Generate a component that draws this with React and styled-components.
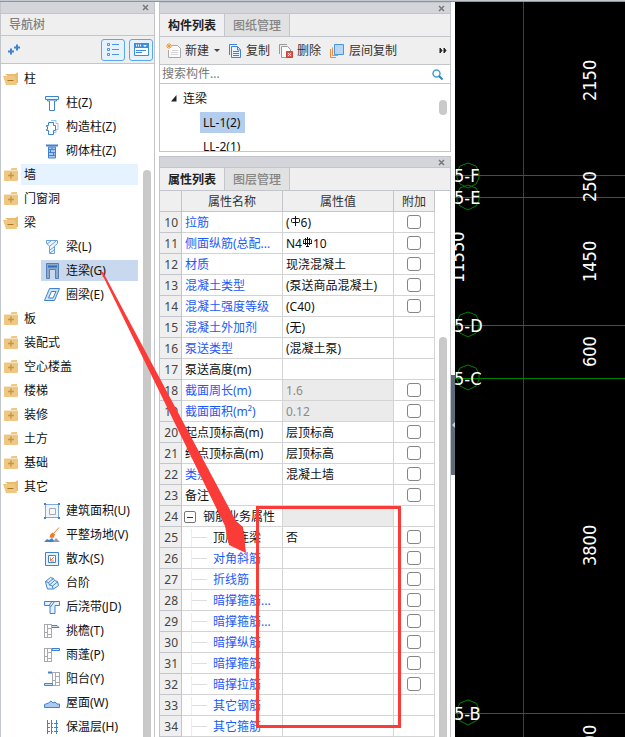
import React from "react";
import styled, { createGlobalStyle, css } from "styled-components";

const Global = createGlobalStyle`
  * { box-sizing: border-box; }
  body { margin: 0; background: #fff; }
  body, button, input, table {
    font-family: "Noto Sans", "Noto Sans CJK SC", sans-serif;
    font-size: 12px;
    line-height: 20px;
    color: #111;
  }
  button { border: 0; padding: 0; background: none; white-space: nowrap; }
`;

const line = "#c3c5cc";

const Window = styled.div`
  position: relative;
  display: flex;
  flex-direction: column;
  height: 100vh;
  overflow: hidden;
`;
const TopEdge = styled.div`
  flex: none;
  height: 2px;
  background: #c3c9cf;
  border-bottom: 1px solid #8d949b;
`;
const Workspace = styled.div`
  flex: 1;
  min-height: 0;
  display: flex;
`;
const Column = styled.div`
  display: flex;
  flex-direction: column;
  gap: 4px;
  width: 292px;
  margin-left: 4px;
`;
const Panel = styled.section`
  display: flex;
  flex-direction: column;
  min-height: 0;
  border: 1px solid ${line};
  border-width: ${(p) => (p.$dock ? "0 1px 0 1px" : "1px")};
  ${(p) => p.$dock && css`width: 155px;`}
  ${(p) => p.$fill && css`flex: 1; border-bottom: 0;`}
`;
const PanelHead = styled.header`
  flex: none;
  display: flex;
  justify-content: flex-end;
  align-items: center;
  height: ${(p) => (p.$tall ? 12 : 11)}px;
  padding-right: 5px;
  background: #d4d5db;
  border-bottom: 1px solid ${line};
`;
const CloseButton = styled.button`
  display: flex;
`;
const PanelTitle = styled.h2`
  flex: none;
  margin: 0;
  padding: 1px 8px 0;
  height: 22px;
  font-size: 12px;
  font-weight: 500;
  color: #808080;
  background: #efefef;
  border-bottom: 1px solid ${line};
`;
const Toolbar = styled.div`
  flex: none;
  display: flex;
  align-items: center;
  height: 28px;
  padding: ${(p) => (p.$views ? "0 1px 0 6px" : "0 3px 0 6px")};
  background: #efefef;
  border-bottom: 1px solid ${line};
`;
const Spacer = styled.span`
  flex: 1;
`;
const ViewButton = styled.button`
  display: flex;
  align-items: center;
  justify-content: center;
  width: 24px;
  height: 22px;
  margin-left: 4px;
  background: #e6f2fd;
  border: 1px solid #5aa7ee;
  border-radius: 3px;
`;
const ToolButton = styled.button`
  display: flex;
  align-items: center;
  gap: 4px;
  margin-right: 8px;
  color: #333;
`;
const IconButton = styled.button`
  display: flex;
`;
const Tabs = styled.div`
  flex: none;
  display: flex;
  height: 23px;
  background: #efefef;
  border-bottom: 1px solid ${line};
`;
const Tab = styled.button`
  padding: 1px 8px 0;
  border-right: 1px solid ${line};
  color: ${(p) => (p.$active ? "#222" : "#858585")};
  font-weight: ${(p) => (p.$active ? 700 : 500)};
  background: ${(p) => (p.$active ? "#f0f0f0" : "#e1e1e1")};
`;
const Scrolled = styled.div`
  flex: 1;
  min-height: 0;
  display: flex;
  overflow: hidden;
`;
const ScrollTrack = styled.div`
  flex: none;
  display: flex;
  width: 15px;
  padding: 0 3px 0 4px;
`;
const ScrollThumb = styled.div`
  width: 8px;
  background: #c9c9c9;
  margin-top: ${(p) => p.$start}px;
  ${(p) => (p.$length ? css`height: ${p.$length}px; border-radius: 4px;` : css`border-radius: 4px 4px 0 0;`)}
`;

/* navigation tree */
const Tree = styled.ul`
  flex: 1;
  display: flex;
  flex-direction: column;
  gap: 3px;
  margin: 0;
  padding: 4px 1px 0 2px;
  list-style: none;
`;
const Branch = styled.li`
  display: flex;
  align-items: center;
  height: 21px;
`;
const BranchLabel = styled.button`
  flex: 1;
  height: 21px;
  margin-left: 2px;
  padding-left: 3px;
  text-align: left;
  background: ${(p) => (p.$hover ? "#e5f2ff" : "none")};
`;
const Leaf = styled.li`
  margin-left: 38px;
  background: ${(p) => (p.$selected ? "#c8d8ef" : "none")};
`;
const LeafButton = styled.button`
  display: flex;
  align-items: center;
  gap: 6px;
  height: 21px;
  padding-left: 3px;
`;

/* component list */
const SearchBox = styled.label`
  flex: none;
  display: flex;
  align-items: center;
  height: 19px;
  padding: 0 7px 0 2px;
  border-bottom: 1px solid ${line};
`;
const SearchInput = styled.input`
  flex: 1;
  min-width: 0;
  height: 18px;
  padding: 0;
  border: 0;
  outline: 0;
  &::placeholder { color: #777; }
`;
const ComponentList = styled.div`
  flex: 1;
  height: 67px;
  display: flex;
  flex-direction: column;
  align-items: flex-start;
  gap: 3px;
  padding: 4px 0 0 10px;
  overflow: hidden;
`;
const GroupName = styled.button`
  flex: none;
  display: flex;
  align-items: center;
  gap: 6px;
  height: 21px;
`;
const ComponentName = styled.button`
  flex: none;
  height: 21px;
  margin-left: 30px;
  padding: 0 5px 0 3px;
  background: ${(p) => (p.$selected ? "#b3cdee" : "none")};
`;

/* property table */
const Grid = styled.table`
  flex: 1;
  width: 100%;
  table-layout: fixed;
  border-collapse: separate;
  border-spacing: 0;
  align-self: flex-start;
  line-height: 18px;
`;
const HeadCell = styled.th`
  height: 21px;
  padding: 2px 0 0;
  font-weight: 400;
  color: #333;
  background: #efefef;
  border-right: 1px solid ${line};
  border-bottom: 1px solid ${line};
  width: ${(p) => (p.$width ? p.$width + "px" : "auto")};
`;
const Cell = styled.td`
  height: 21px;
  padding: 2px 0 0 3px;
  white-space: nowrap;
  overflow: hidden;
  color: ${(p) => (p.$link ? "#1a5afa" : p.$off ? "#8a8a8a" : "#111")};
  background: ${(p) => (p.$off ? "#ebebeb" : "#fff")};
  border-right: 1px solid #d4d4d4;
  border-bottom: 1px solid #d4d4d4;
`;
const NumberCell = styled(Cell)`
  padding: 2px 3px 0 0;
  text-align: right;
  color: #444;
  background: #efefef;
  border-color: ${line};
`;
const CheckCell = styled(Cell)`
  padding: 0;
  text-align: center;
`;
const NameLine = styled.span`
  display: flex;
  align-items: center;
  gap: ${(p) => (p.$child ? 6 : 7)}px;
  padding-left: ${(p) => (p.$child ? 6 : 0)}px;
`;
const Twig = styled.span`
  width: 16px;
  height: 18px;
  border-left: 1px solid #ededed;
  background: linear-gradient(#dedede, #dedede) 0 8px / 16px 1px no-repeat;
`;
const Toggle = styled.button`
  display: flex;
  align-items: center;
  justify-content: center;
  width: 12px;
  height: 12px;
  margin-left: -1px;
  border: 1px solid #777;
  border-radius: 2px;
  line-height: 10px;
`;
const ValueLine = styled.span`
  display: flex;
  align-items: flex-start;
`;
const Check = styled.input`
  appearance: none;
  display: block;
  width: 14px;
  height: 14px;
  margin: 0 auto;
  background: #fff;
  border: 1px solid #858585;
  border-radius: 3px;
`;

const Gutter = styled.div`
  flex: none;
  width: 4px;
`;
const CollapseHandle = styled.button`
  display: flex;
  align-items: center;
  justify-content: flex-end;
  width: 4px;
  height: 100px;
  margin-top: 373px;
  background: #5f6b78;
`;
const Viewport = styled.main`
  flex: 1;
  min-width: 0;
  overflow: hidden;
  background: #000;
`;
const Drawing = styled.svg`
  display: block;
  font-family: "DejaVu Sans Condensed", "Noto Sans", sans-serif;
  font-size: 18px;
`;
const Markup = styled.svg`
  position: absolute;
  top: 0;
  left: 0;
  pointer-events: none;
`;

const Svg = ({ w = 16, h = 16, children }) => (
  <svg width={w} height={h} viewBox={`0 0 ${w} ${h}`} fill="none" aria-hidden="true">
    {children}
  </svg>
);

const Folder = ({ open }) =>
  open ? (
    <Svg>
      <path d="M2 3h10l2-1.500h1V12h-2" fill="#e9bd6c" />
      <path d="M0 5h12l2 9H3z" fill="#eec783" />
      <path d="M4.500 9.500h6" stroke="#a97a24" strokeWidth="1" />
    </Svg>
  ) : (
    <Svg>
      <path d="M8 2l1-1h5v2H8z" fill="#eec783" />
      <path d="M1 3.500h14V13q0 1-1 1H2q-1 0-1-1z" fill="#eec783" />
      <path d="M5 8.500h6M8 5.500v6" stroke="#c4994a" strokeWidth="1.500" />
    </Svg>
  );

const B = "#3f83d0";
const G = "#a9a9ad";
const wall = (x) => (
  <path
    d={`M${x + 0.5} 1v14M${x + 3.5} 1v14M${x + 7.5} 1v14M${x} 1.500h8M${x} 14.500h8M${x} 9.500h4M${x + 3} 5.500h4M${x + 3} 11.500h4`}
    stroke={G}
  />
);
const icons = {
  column: (
    <g stroke={B} fill="#eef6ff">
      <path d="M1.500 1.500h13v3h-2v1.500h-9V4.500h-2z" />
      <path d="M5.500 6v9.500h5V6" fill="#fff" />
      <path d="M3.500 4.500h9" />
    </g>
  ),
  shaped: (
    <>
      <path d="M7 1.500h5v3h2v6h-2v3H9" stroke="#9cc3ec" />
      <path d="M4.500 3.500h5v3h2v5h-2v4h-5v-4h-2v-1h1v-3h-1v-1h2z" stroke={B} fill="#fff" />
    </>
  ),
  masonry: (
    <>
      <path d="M2 2.500h12" stroke={B} strokeWidth="2" />
      <path d="M4.500 4h7v11h-7z" fill="#a9c9ee" stroke={B} />
      <path d="M4 6.500h8M4 9.500h8M4 12.500h8M8 4v2.500M6.500 6.500v3M9.500 9.500v3" stroke={B} />
    </>
  ),
  beam: (
    <>
      <path d="M2.500 1.500h11v3l-3 2.500v7.500h-5V7l-3-2.500z" fill="#eef6ff" stroke="#6aa0dc" />
      <path d="M3 5l4-3M6 7l6-5M6 11l4-3M6 14l4-3" stroke="#6aa0dc" />
    </>
  ),
  coupling: (
    <>
      <path d="M2.500.500h12v15h-3v-9h-6v9h-3z" fill="#8fa9c8" stroke="#5580b5" />
      <path d="M4 3.500h9" stroke="#2f6fc2" strokeWidth="2" />
    </>
  ),
  ring: (
    <g stroke={B} fill="#cfe3f8">
      <path d="M5.500 1.500h10l-5 12H.500z" />
      <path d="M7.500 4.500h4.500l-3 6.500H4.500z" fill="#fff" />
    </g>
  ),
  area: (
    <>
      <path d="M1.500 1.500h13v13h-13z" fill="#edf5fd" stroke="#7aabe0" />
      <path d="M5.500 5.500h6v6h-6z" fill="#f7f7f7" stroke={G} />
      <path d="M0 0h2v2H0zM14 0h2v2h-2zM0 14h2v2H0zM14 14h2v2h-2z" fill="#4c7fb8" />
    </>
  ),
  ground: (
    <>
      <path d="M0 15l3-3 2 1 3-2 3 4z" fill={B} />
      <path d="M9 15l3-4 4 4z" fill="#9b9b9f" />
      <path d="M15 .500l-5 5.500" stroke="#ee7b3c" />
      <path d="M9 5.500l2 2-1.500 3.500-4-.500 1-3.500z" fill="#ee7b2c" />
    </>
  ),
  apron: (
    <>
      <path d="M1.500 1.500h13v13h-13z" fill="#e8f2fd" stroke={B} />
      <path d="M4.500 4.500h7v7h-7z" fill="#fff" stroke={B} />
      <path d="M10 6l-3.500 3.500M6.500 6.500v3.500H10" stroke="#e47d4c" />
    </>
  ),
  steps: (
    <g stroke={B} fill="#e4f0fd">
      <path d="M1.500 6.500l5-4 3 1 1 2 3 1 1 4-5 3.500H3.500l-1-3z" />
      <path d="M1.500 6.500l3 1 1 2.500 3 1 .500 3M4.500 7.500l5-4M5.500 10l5-4.500M8.500 11l5-4" />
    </g>
  ),
  strip: (
    <>
      <path d="M.500 2.500h15v4H11v8H6v-8H.500z" fill="#e4f0fd" stroke={B} />
      <path d="M5 6.500l3-4M6.500 8l4-5.500" stroke={B} />
    </>
  ),
  eaves: (
    <>
      {wall(0)}
      <path d="M8 2.500h5l2 2H8" stroke={B} fill="#cfe3f8" />
    </>
  ),
  canopy: (
    <>
      {wall(0)}
      <path d="M8 1.500h7.500v2H8z" stroke={B} fill="#cfe3f8" />
    </>
  ),
  balcony: (
    <>
      {wall(8)}
      <path d="M4 1.500h4" stroke={B} strokeWidth="2" />
      <path d="M.500 12.500h8v2h-8z" stroke={B} fill="#cfe3f8" />
    </>
  ),
  roof: <path d="M.500 12.500v-3l4-1.500 2.500-2 2 2 2-1 2 2h2.500v3.500z" fill="#a9c9ee" stroke={B} />,
  insulation: (
    <>
      <path d="M3.500 1v14M7.500 1v14M12.500 1v14" stroke={B} />
      <path d="M4 4.500h10M4 8.500h10M4 12.500h10" stroke={B} strokeDasharray="2 1" />
    </>
  ),
};

const Close = () => (
  <Svg w={7} h={7}>
    <path d="M1 1l5 5M6 1L1 6" stroke="#777" strokeWidth="1.500" />
  </Svg>
);

const tree = [
  ["open", "柱"],
  ["column", "柱(Z)"],
  ["shaped", "构造柱(Z)"],
  ["masonry", "砌体柱(Z)"],
  ["closed", "墙", true],
  ["closed", "门窗洞"],
  ["open", "梁"],
  ["beam", "梁(L)"],
  ["coupling", "连梁(G)", true],
  ["ring", "圈梁(E)"],
  ["closed", "板"],
  ["closed", "装配式"],
  ["closed", "空心楼盖"],
  ["closed", "楼梯"],
  ["closed", "装修"],
  ["closed", "土方"],
  ["closed", "基础"],
  ["open", "其它"],
  ["area", "建筑面积(U)"],
  ["ground", "平整场地(V)"],
  ["apron", "散水(S)"],
  ["steps", "台阶"],
  ["strip", "后浇带(JD)"],
  ["eaves", "挑檐(T)"],
  ["canopy", "雨蓬(P)"],
  ["balcony", "阳台(Y)"],
  ["roof", "屋面(W)"],
  ["insulation", "保温层(H)"],
];

const Rebar = ({ ribbed }) => (
  <svg width="11" height="14" viewBox="0 0 11 14" fill="none" stroke="#111" role="img" aria-label="Φ">
    <path d="M5.500 2v10" />
    <rect x="1.500" y="4.500" width="8" height="4" rx="1" />
    {ribbed && <path d="M1 8.500h9M4 11.500h3M3.500 3v7M7.500 3v7" />}
  </svg>
);

const rows = [
  { name: "拉筋", link: true, value: <>(<Rebar />6)</>, check: true },
  { name: "侧面纵筋(总配...", link: true, value: <>N4<Rebar ribbed />10</>, check: true },
  { name: "材质", link: true, value: "现浇混凝土", check: true },
  { name: "混凝土类型", link: true, value: "(泵送商品混凝土)", check: true },
  { name: "混凝土强度等级", link: true, value: "(C40)", check: true },
  { name: "混凝土外加剂", link: true, value: "(无)" },
  { name: "泵送类型", link: true, value: "(混凝土泵)" },
  { name: "泵送高度(m)" },
  { name: "截面周长(m)", link: true, value: "1.6", off: true, check: true },
  { name: "截面面积(m²)", link: true, value: "0.12", off: true, check: true },
  { name: "起点顶标高(m)", value: "层顶标高", check: true },
  { name: "终点顶标高(m)", value: "层顶标高", check: true },
  { name: "类别", link: true, value: "混凝土墙", check: true },
  { name: "备注", check: true },
  { name: "钢筋业务属性", group: true, off: true },
  { name: "顶层连梁", child: true, value: "否", check: true },
  { name: "对角斜筋", child: true, link: true, check: true },
  { name: "折线筋", child: true, link: true, check: true },
  { name: "暗撑箍筋...", child: true, link: true, check: true },
  { name: "暗撑箍筋...", child: true, link: true, check: true },
  { name: "暗撑纵筋", child: true, link: true, check: true },
  { name: "暗撑箍筋", child: true, link: true, check: true },
  { name: "暗撑拉筋", child: true, link: true, check: true },
  { name: "其它钢筋", child: true, link: true },
  { name: "其它箍筋", child: true, link: true },
];

const axes = [
  ["5-F", 173, 12],
  ["5-E", 195, 12],
  ["5-D", 323, 13],
  ["5-C", 376, 13],
  ["5-B", 711, 13],
];
const dims = [
  ["2150", 141, 99],
  ["250", 141, 200],
  ["1450", 141, 280],
  ["600", 141, 365],
  ["3800", 141, 564],
  ["2100", 141, 764],
  ["11550", 9, 281],
];

const NavPanel = () => (
  <Panel $dock aria-label="导航树">
    <PanelHead $tall><CloseButton aria-label="关闭"><Close /></CloseButton></PanelHead>
    <PanelTitle>导航树</PanelTitle>
    <Toolbar $views>
      <IconButton aria-label="展开">
        <Svg>
          <path d="M1 9.500h6M4 6.500v6M7 5.500h6M10 2.500v6" stroke={B} strokeWidth="2" />
        </Svg>
      </IconButton>
      <Spacer />
      <ViewButton aria-label="列表视图">
        <Svg>
          <path d="M2.500 1.500h2v2h-2zM2.500 6.500h2v2h-2zM2.500 11.500h2v2h-2zM7 2.500h7M7 7.500h7M7 12.500h7" stroke="#4b94df" />
        </Svg>
      </ViewButton>
      <ViewButton aria-label="窗口视图">
        <Svg>
          <path d="M1.500 1.500h14v12h-14z" fill="#fff" stroke="#3b8de0" />
          <path d="M1 1h15v5H1z" fill="#3b8de0" />
          <path d="M3.500 2.500v2M5.500 2.500v2M7.500 2.500v2" stroke="#fff" />
          <path d="M10 3h4l-2 2z" fill="#fff" />
          <path d="M3 8.500h10M3 10.500h6" stroke="#3b8de0" />
        </Svg>
      </ViewButton>
    </Toolbar>
    <Scrolled>
      <Tree>
        {tree.map(([kind, label, lit]) =>
          icons[kind] ? (
            <Leaf key={label} $selected={lit}>
              <LeafButton><Svg>{icons[kind]}</Svg>{label}</LeafButton>
            </Leaf>
          ) : (
            <Branch key={label}>
              <Folder open={kind === "open"} />
              <BranchLabel $hover={lit}>{label}</BranchLabel>
            </Branch>
          )
        )}
      </Tree>
      <ScrollTrack><ScrollThumb $start={106} /></ScrollTrack>
    </Scrolled>
  </Panel>
);

const ComponentPanel = () => (
  <Panel aria-label="构件列表">
    <PanelHead><CloseButton aria-label="关闭"><Close /></CloseButton></PanelHead>
    <Tabs>
      <Tab $active>构件列表</Tab>
      <Tab>图纸管理</Tab>
    </Tabs>
    <Toolbar>
      <ToolButton>
        <Svg w={15}>
          <path d="M5.500 2.500h6l3 3v9h-12V7" stroke={G} fill="#fafafa" />
          <path d="M6 7.500h6M5 9.500h7M5 11.500h7" stroke="#d5d5d5" />
          <path d="M3 0v6M0 3h6M1 1l4 4M5 1L1 5" stroke="#ee9a3c" />
        </Svg>
        新建
        <Svg w={7} h={6}><path d="M1 1h6L4 4z" fill="#444" /></Svg>
      </ToolButton>
      <ToolButton>
        <Svg w={14}>
          <path d="M1.500 12V1.500H9" stroke={B} />
          <path d="M3.500 3.500h6l3 3v8h-9z" stroke={B} fill="#eaf3fd" />
          <path d="M5 8.500h6M5 10.500h6M5 12.500h6M9.500 4v3H12" stroke={B} />
        </Svg>
        复制
      </ToolButton>
      <ToolButton>
        <Svg w={15}>
          <path d="M1.500 11V1.500H9" stroke="#999" />
          <path d="M3.500 3.500h6l3 3v8h-9z" stroke="#999" fill="#fafafa" />
          <path d="M8.500 8.500h6v6h-6z" fill="#dc5450" stroke="#c8423e" />
          <path d="M10 10l3 3M13 10l-3 3" stroke="#fff" />
        </Svg>
        删除
      </ToolButton>
      <ToolButton>
        <Svg>
          <path d="M1.500 6v8.500H7M3.500 4.500v8H9" stroke="#ea8a45" />
          <path d="M5.500 1.500h9v10h-9z" fill="#b6d6fb" stroke="#4b94df" />
        </Svg>
        层间复制
      </ToolButton>
      <Spacer />
      <IconButton aria-label="更多">
        <Svg w={8} h={7}><path d="M1 1l2 2.500L1 6zM5 1l2 2.500L5 6z" fill="#222" stroke="#222" /></Svg>
      </IconButton>
    </Toolbar>
    <SearchBox>
      <SearchInput type="search" aria-label="搜索构件" placeholder="搜索构件..." />
      <Svg w={11} h={11}>
        <circle cx="4.500" cy="4.500" r="3.500" stroke="#4aa0cf" strokeWidth="1.500" />
        <path d="M7 7l3.500 3.500" stroke="#2b83b8" strokeWidth="2" />
      </Svg>
    </SearchBox>
    <Scrolled>
      <ComponentList>
        <GroupName>
          <Svg w={7} h={7}><path d="M6.500 0v6.500H1z" fill="#222" /></Svg>
          连梁
        </GroupName>
        <ComponentName $selected>LL-1(2)</ComponentName>
        <ComponentName>LL-2(1)</ComponentName>
      </ComponentList>
      <ScrollTrack><ScrollThumb $start={16} $length={15} /></ScrollTrack>
    </Scrolled>
  </Panel>
);

const PropertyPanel = () => (
  <Panel $fill aria-label="属性列表">
    <PanelHead><CloseButton aria-label="关闭"><Close /></CloseButton></PanelHead>
    <Tabs>
      <Tab $active>属性列表</Tab>
      <Tab>图层管理</Tab>
    </Tabs>
    <Scrolled>
      <Grid>
        <thead>
          <tr>
            <HeadCell $width={22} aria-label="序号" />
            <HeadCell $width={101}>属性名称</HeadCell>
            <HeadCell>属性值</HeadCell>
            <HeadCell $width={41}>附加</HeadCell>
          </tr>
        </thead>
        <tbody>
          {rows.map((r, i) => (
            <tr key={i}>
              <NumberCell>{i + 10}</NumberCell>
              <Cell $link={r.link}>
                <NameLine $child={r.child}>
                  {r.group && (
                    <Toggle aria-label="折叠">
                      <Svg w={6} h={1}><path d="M0 .500h6" stroke="#333" /></Svg>
                    </Toggle>
                  )}
                  {r.child && <Twig />}
                  {r.name}
                </NameLine>
              </Cell>
              <Cell $off={r.off}><ValueLine>{r.value}</ValueLine></Cell>
              <CheckCell>{r.check && <Check type="checkbox" aria-label={r.name} />}</CheckCell>
            </tr>
          ))}
        </tbody>
      </Grid>
      <ScrollTrack><ScrollThumb $start={146} /></ScrollTrack>
    </Scrolled>
  </Panel>
);

const CadView = () => (
  <Viewport aria-label="绘图区">
    <Drawing width="100%" height="100%">
      <g stroke="#008000" fill="none">
        <line x1="68.500" x2="68.500" y1="0" y2="100%" stroke="#006c00" />
        {axes.map(([t, y, r]) => (
          <g key={t}>
            <line x1="0" x2="100%" y1={y + 0.5} y2={y + 0.5} />
            <path d={`M13 ${y - r}l8 3l3 6v6l-3 6l-8 4l-8-4l-3-6v-6l3-6z`} />
          </g>
        ))}
      </g>
      <g fill="#fff">
        {axes.map(([t, y]) => <text key={t} x="-1" y={y + 7}>{t}</text>)}
        {dims.map(([t, x, y]) => (
          <text key={t} transform={`translate(${x} ${y}) rotate(-90)`}>{t}</text>
        ))}
      </g>
    </Drawing>
  </Viewport>
);

export default function App() {
  return (
    <Window>
      <Global />
      <TopEdge />
      <Workspace>
        <NavPanel />
        <Column>
          <ComponentPanel />
          <PropertyPanel />
        </Column>
        <Gutter>
          <CollapseHandle aria-label="收起">
            <Svg w={3} h={6}><path d="M3 0v6L0 3z" fill="#c8ced4" /></Svg>
          </CollapseHandle>
        </Gutter>
        <CadView />
      </Workspace>
      <Markup width="410" height="737" aria-hidden="true">
        <rect x="257.500" y="507.500" width="142" height="219" fill="none" stroke="#fb3b37" strokeWidth="3" />
        <path d="M101 272L225 526L229 545L246 553L243 527L236 521L103 272z" fill="#fb3b37" />
      </Markup>
    </Window>
  );
}
